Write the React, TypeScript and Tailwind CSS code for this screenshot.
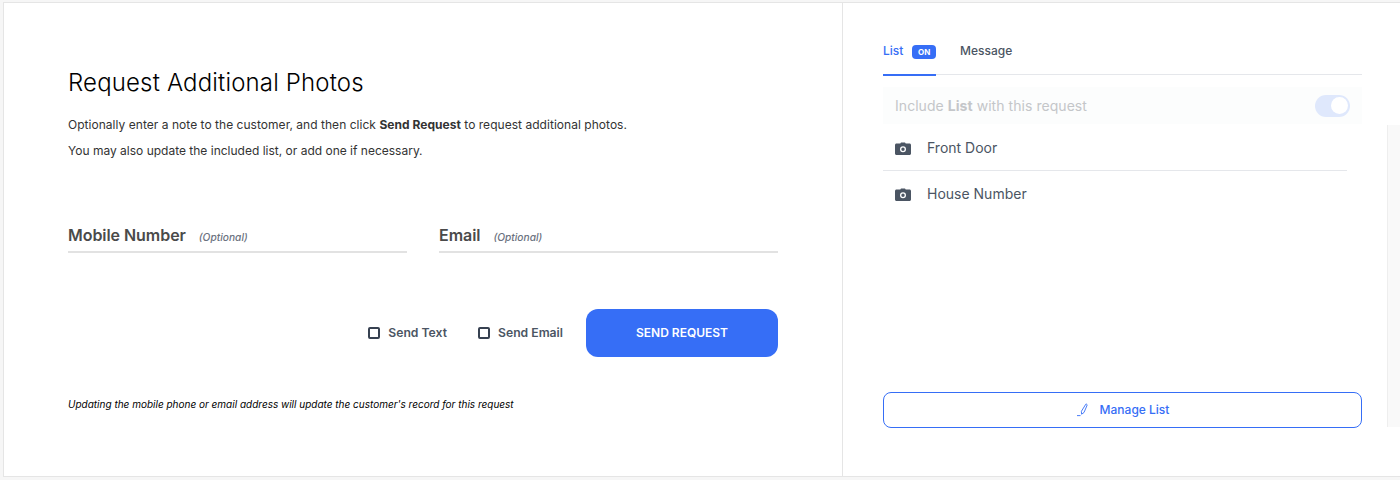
function Checkbox({ label }: { label: string }) {
  return (
    <label className="flex items-center gap-[8px] text-[12.2px] leading-[16px] font-semibold text-[#4b5563]">
      <span className="h-[12px] w-[12px] rounded-[2px] border-2 border-[#374151]" />
      {label}
    </label>
  )
}

function Field({ label }: { label: string }) {
  return (
    <div className="flex h-[37px] flex-1 items-start gap-[13px] border-b-2 border-[#e2e2e2] pt-[9px]">
      <span className="text-[16px] leading-[20px] font-semibold tracking-[-0.05px] text-[#4a4a4a]">{label}</span>
      <span className="pt-[4px] text-[10.2px] leading-[16px] font-medium text-[#6b7280] italic">(Optional)</span>
    </div>
  )
}

function CameraIcon() {
  return (
    <svg viewBox="0 0 16 14" className="mt-[2px] h-[14px] w-[16px] text-[#4b5563]">
      <path
        fill="currentColor"
        fillRule="evenodd"
        d="M5.3 1.6 6 .6h4l.7 1H14.500c.8 0 1.500.7 1.500 1.500v8.300c0 .8-.7 1.500-1.500 1.500h-13C.7 12.900 0 12.200 0 11.400V3.100c0-.8.7-1.500 1.500-1.500zM8 4.200a3 3 0 1 0 0 6 3 3 0 0 0 0-6zm0 1.300a1.700 1.700 0 1 1 0 3.400 1.700 1.700 0 0 1 0-3.400z"
      />
    </svg>
  )
}

function ListRow({ label, divider }: { label: string; divider?: boolean }) {
  return (
    <div className={`flex w-[464px] items-center gap-[16px] pl-[12px] ${divider ? 'h-[47px] border-b border-[#e5e7eb] pt-[2px]' : 'h-[46px]'}`}>
      <CameraIcon />
      <span className="text-[14px] leading-[20px] text-[#4b5563]">{label}</span>
    </div>
  )
}

export default function App() {
  return (
    <div className="h-[480px] w-[1400px] overflow-hidden bg-[#f6f6f6] pt-[2px] pl-[3px] font-['Inter',sans-serif]">
      <div className="flex h-[475px] border-t border-b border-l border-[#e5e5e5] bg-white">
        <div className="w-[839px] shrink-0 border-r border-[#e5e5e5] pt-[65px] pl-[64px]">
          <h1 className="text-[24px] leading-[30px] font-light tracking-[0.16px] text-black">Request Additional Photos</h1>
          <p className="mt-[18px] text-[12px] leading-[18px] tracking-[0.035px] text-[#333333]">
            Optionally enter a note to the customer, and then click <b className="font-bold">Send Request</b> to request additional photos.
          </p>
          <p className="mt-[8px] text-[12px] leading-[18px] text-[#333333]">You may also update the included list, or add one if necessary.</p>

          <div className="mt-[56px] flex w-[710px] gap-[32px]">
            <Field label="Mobile Number" />
            <Field label="Email" />
          </div>

          <div className="mt-[56px] flex w-[710px] items-center justify-end">
            <Checkbox label="Send Text" />
            <div className="ml-[31px]">
              <Checkbox label="Send Email" />
            </div>
            <button className="ml-[23px] h-[48px] w-[192px] rounded-[12px] bg-[#366ef6] text-[12px] font-semibold text-white">SEND REQUEST</button>
          </div>

          <p className="mt-[40px] text-[10px] leading-[14px] text-black italic">
            Updating the mobile phone or email address will update the customer's record for this request
          </p>
        </div>

        <div className="flex flex-1">
          <div className="flex w-[544px] shrink-0 flex-col pt-[29px] pl-[40px]">
            <div className="flex h-[43px] w-[479px] border-b border-[#e5e7eb]">
              <div className="-mb-px flex h-[44px] w-[53px] items-start gap-[9px] border-b-2 border-[#366ef6] pt-[10px]">
                <span className="text-[12px] leading-[18px] font-medium text-[#366ef6]">List</span>
                <span className="mt-[3px] flex h-[14px] w-[24px] items-center justify-center rounded-[4px] bg-[#366ef6] text-[8px] font-bold text-white">ON</span>
              </div>
              <span className="ml-[24px] pt-[10px] text-[12px] leading-[18px] font-medium text-[#4b5563]">Message</span>
            </div>
            <div className="mt-[12px] flex h-[37px] w-[479px] items-center justify-between bg-[#fcfdfd] pr-[12px] pl-[12px]">
              <span className="text-[14px] leading-[20px] tracking-[0.05px] text-[#c4c6c9]">
                Include <b className="font-bold">List</b> with this request
              </span>
              <span className="flex h-[22px] w-[35px] items-center justify-end rounded-full bg-[#dfe8fc] pr-[2px]">
                <span className="h-[17px] w-[17px] rounded-full bg-white" />
              </span>
            </div>
            <ListRow label="Front Door" divider />
            <ListRow label="House Number" />
            <button className="mt-[175px] flex h-[36px] w-[479px] items-center justify-center gap-[10px] rounded-[8px] border border-[#366ef6] bg-white text-[12px] font-medium text-[#366ef6]">
              <svg viewBox="0 0 14 14" fill="none" stroke="currentColor" strokeWidth="0.9" className="h-[14px] w-[14px]">
                <path d="M9.800 1.200c.6-.3 1.300.1 1.400.8L8 9.500l-2.400 1.700-.2-2.900z" />
                <path d="M1 12.600h3.500" />
              </svg>
              Manage List
            </button>
          </div>
          <div className="flex-1">
            <div className="mt-[122px] h-[302px] border-l border-[#eeeeee] bg-[#f9f9f9]" />
          </div>
        </div>
      </div>
    </div>
  )
}
